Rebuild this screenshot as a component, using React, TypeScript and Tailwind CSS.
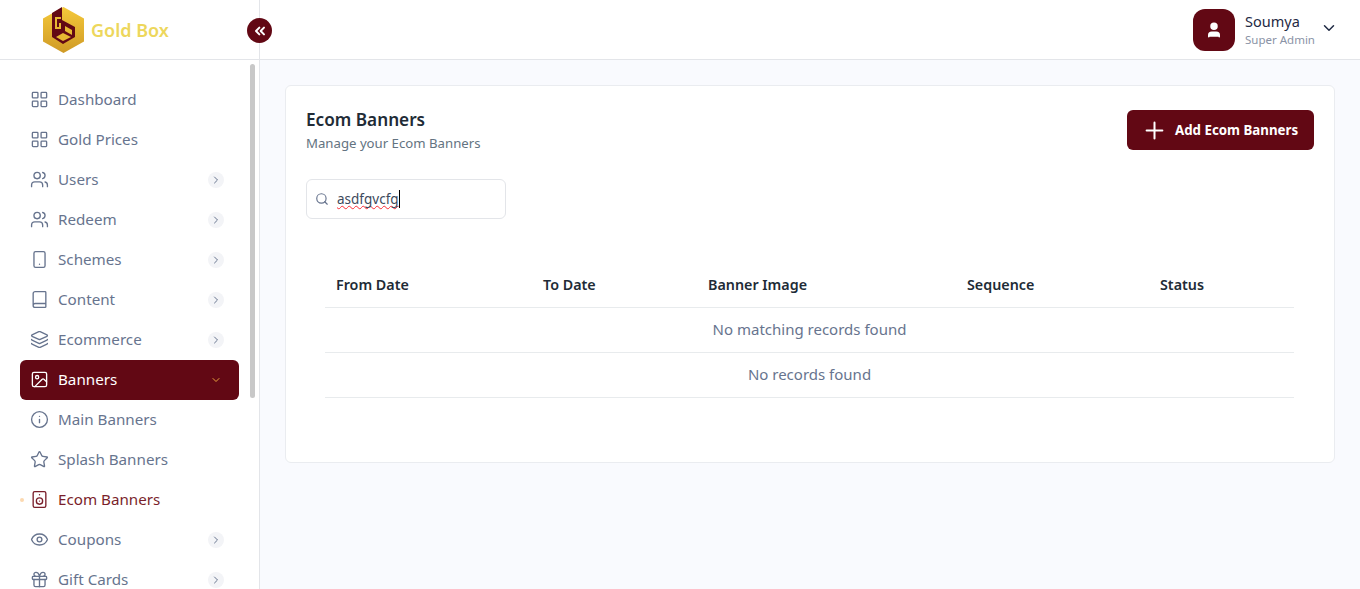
import {
  Book,
  ChevronDown,
  ChevronRight,
  ChevronsLeft,
  Eye,
  Gift,
  Image,
  Info,
  Layers,
  LayoutGrid,
  Plus,
  Search,
  Smartphone,
  Speaker,
  Star,
  User,
  Users,
} from 'lucide-react';
import type { LucideIcon } from 'lucide-react';

type NavItem = {
  label: string;
  icon: LucideIcon;
  hasChildren?: boolean;
  state?: 'open' | 'current';
};

const navItems: NavItem[] = [
  { label: 'Dashboard', icon: LayoutGrid },
  { label: 'Gold Prices', icon: LayoutGrid },
  { label: 'Users', icon: Users, hasChildren: true },
  { label: 'Redeem', icon: Users, hasChildren: true },
  { label: 'Schemes', icon: Smartphone, hasChildren: true },
  { label: 'Content', icon: Book, hasChildren: true },
  { label: 'Ecommerce', icon: Layers, hasChildren: true },
  { label: 'Banners', icon: Image, state: 'open' },
  { label: 'Main Banners', icon: Info },
  { label: 'Splash Banners', icon: Star },
  { label: 'Ecom Banners', icon: Speaker, state: 'current' },
  { label: 'Coupons', icon: Eye, hasChildren: true },
  { label: 'Gift Cards', icon: Gift, hasChildren: true },
];

const columns = ['From Date', 'To Date', 'Banner Image', 'Sequence', 'Status'];

function Logo() {
  return (
    <svg viewBox="0 0 41 46" className="h-[46px] w-[41px]">
      <defs>
        <linearGradient id="hex" x1="0" y1="0" x2="0" y2="1">
          <stop offset="0" stopColor="#f5c93a" />
          <stop offset="1" stopColor="#cf9a26" />
        </linearGradient>
      </defs>
      <path d="M20.5 0 41 11.5V34.5L20.5 46 0 34.5V11.5Z" fill="url(#hex)" />
      <path d="M9 6 19 0V13L32 20V30L20 37 9 30Z" fill="#620814" />
      <path d="M12 10h6v2h-4v8h2v-4h2v6h-6z" fill="#e6b732" />
      <path d="M22 19 29 23V28L22 24Z" fill="#e6b732" />
      <path d="M13 30 20 26 28 30 20 34Z" fill="#e6b732" />
    </svg>
  );
}

function SidebarRow({ item }: { item: NavItem }) {
  const Icon = item.icon;
  const open = item.state === 'open';
  const current = item.state === 'current';

  return (
    <li
      className={`relative flex h-10 items-center pl-[10px] pr-[15px] ${
        open ? 'rounded-md bg-[#620814] text-white' : current ? 'text-[#7a1f2b]' : 'text-[#67748e]'
      }`}
    >
      {current && (
        <span className="absolute left-0 top-[18px] h-1 w-1 rounded-full bg-[#fcd9b0]" />
      )}
      <Icon className="-mt-px h-[19px] w-[19px] shrink-0" strokeWidth={1.7} />
      <span className="ml-[9px] flex-1 pb-px text-[15.2px] leading-none">{item.label}</span>
      {item.hasChildren && (
        <span className="flex h-4 w-4 items-center justify-center rounded-full bg-[#f3f4f7] text-[#67748e]">
          <ChevronRight className="h-3 w-3" strokeWidth={2} />
        </span>
      )}
      {open && (
        <span className="flex h-4 w-4 items-center justify-center text-[#e8a33d]">
          <ChevronDown className="h-3 w-3" strokeWidth={2} />
        </span>
      )}
    </li>
  );
}

export default function App() {
  return (
    <div className="flex h-[589px] flex-col overflow-hidden bg-white font-['Noto_Sans',sans-serif]">
      <header className="flex h-[60px] shrink-0 items-center border-b border-[#e3e5e9] bg-white">
        <div className="relative flex h-full w-[260px] shrink-0 items-center border-r border-[#e3e5e9] pl-[43px]">
          <Logo />
          <span className="ml-[7px] mt-[2px] text-[18px] font-semibold text-[#edd75c]">Gold Box</span>
          <button
            type="button"
            aria-label="Collapse sidebar"
            className="absolute -right-[13px] top-[18px] flex h-[25px] w-[25px] items-center justify-center rounded-full bg-[#620814] text-white"
          >
            <ChevronsLeft className="h-4 w-4" strokeWidth={3} />
          </button>
        </div>
        <div className="ml-auto flex items-center pr-[22px]">
          <span className="flex h-[42px] w-[42px] items-center justify-center rounded-xl bg-[#620814] text-white">
            <User className="h-[18px] w-[18px]" fill="currentColor" />
          </span>
          <div className="ml-[10px] w-[75px]">
            <div className="text-[14.5px] leading-[18px] text-[#1f2a44]">Soumya</div>
            <div className="mt-[2px] text-[11.5px] leading-[16px] text-[#8a93a6]">Super Admin</div>
          </div>
          <ChevronDown className="mb-[3px] h-[18px] w-[18px] text-[#1f2a44]" strokeWidth={2} />
        </div>
      </header>

      <div className="flex min-h-0 flex-1">
        <aside className="relative w-[260px] shrink-0 overflow-hidden border-r border-[#e3e5e9] bg-white pl-5 pr-5 pt-5">
          <ul className="w-[219px]">
            {navItems.map(item => (
              <SidebarRow key={item.label} item={item} />
            ))}
          </ul>
          <div className="absolute left-[250px] top-1 h-[334px] w-[5px] rounded-full bg-[#c8c8c8]" />
        </aside>

        <main className="min-w-0 flex-1 bg-[#f9fafe] pl-[25px] pr-[25px] pt-[25px]">
          <section className="h-[378px] rounded-md border border-[#eaecf0] bg-white pl-5 pr-5 pt-6">
            <div className="flex items-start justify-between">
              <div>
                <h1 className="text-[17.2px] font-semibold leading-[20px] text-[#212b36]">Ecom Banners</h1>
                <p className="mt-1 text-[13.2px] leading-[18px] text-[#637381]">Manage your Ecom Banners</p>
              </div>
              <button
                type="button"
                className="flex h-10 w-[187px] items-center rounded-md bg-[#620814] pl-[14px] text-[13.3px] font-bold text-white"
              >
                <Plus className="h-[27px] w-[27px]" strokeWidth={1.8} />
                <span className="ml-[7px] mt-[2px]">Add Ecom Banners</span>
              </button>
            </div>

            <div className="mt-[27px] flex h-10 w-[200px] items-center rounded-md border border-[#e3e5e9] pl-[8px]">
              <Search className="h-[14px] w-[14px] text-[#67748e]" strokeWidth={2} />
              <span className="ml-[8px] text-[13.5px] text-[#3d4a5c] underline decoration-red-500 decoration-wavy decoration-1 [text-decoration-skip-ink:none]">
                asdfgvcfg
              </span>
              <span className="h-[18px] w-px bg-black" />
            </div>

            <div className="ml-[19px] mt-[44px] w-[969px] text-[15px]">
              <div className="grid h-[45px] grid-cols-[207px_165px_259px_193px_1fr] items-center border-b border-[#e8ebed] pl-[11px] text-[14.3px] font-semibold text-[#212b36]">
                {columns.map(col => (
                  <span key={col}>{col}</span>
                ))}
              </div>
              <div className="flex h-[45px] items-center justify-center border-b border-[#e8ebed] pb-[2px] text-[#67748e]">
                No matching records found
              </div>
              <div className="flex h-[45px] items-center justify-center border-b border-[#e8ebed] pb-[2px] text-[#67748e]">
                No records found
              </div>
            </div>
          </section>
        </main>
      </div>
    </div>
  );
}
